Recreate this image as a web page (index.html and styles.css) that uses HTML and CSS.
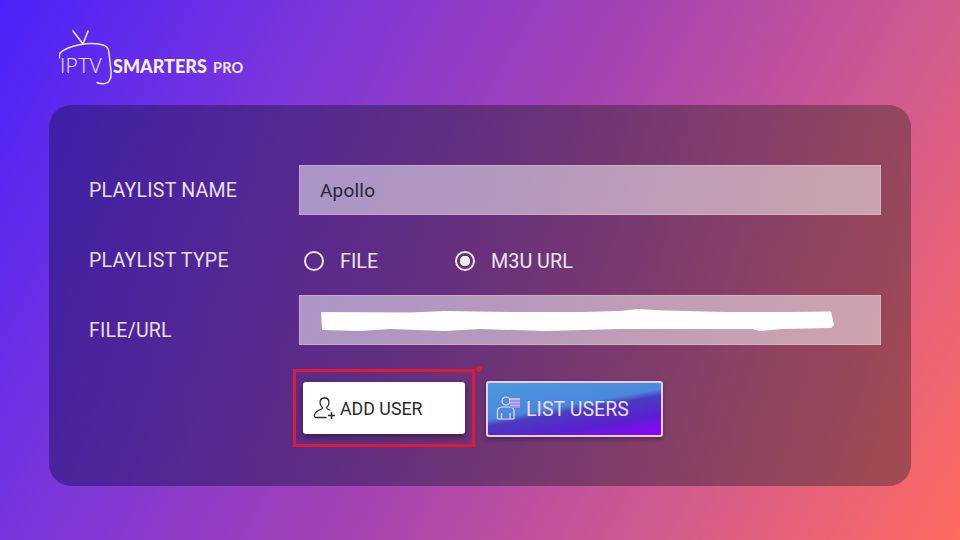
FILE: index.html
```html
<!DOCTYPE html>
<html lang="en">
<head>
<meta charset="utf-8">
<title>IPTV Smarters Pro</title>
<link rel="stylesheet" href="styles.css">
</head>
<body>
<div class="page">
  <header class="logo">
    <svg class="logo-tv" width="72" height="60" viewBox="0 0 72 60" aria-hidden="true">
      <path d="M1 24C10 16 30 13 42 15.500C48 16.500 49.500 19 50 24L52 42C52.500 50 50 54 46 54.500C43 55 40 54.500 38 53.500" fill="none" stroke="#efe4fb" stroke-width="1.500" stroke-linecap="round"/>
      <path d="M1 24L0.500 29" fill="none" stroke="#efe4fb" stroke-width="1.200" stroke-linecap="round"/>
      <path d="M14 2L24 15L29 2" fill="none" stroke="#efe4fb" stroke-width="1.600" stroke-linecap="round" stroke-linejoin="round"/>
    </svg>
    <span class="logo-iptv">IPTV</span>
    <span class="logo-smarters">SMARTERS</span>
    <span class="logo-pro">PRO</span>
  </header>
  <main class="panel">
    <div class="row row-name">
      <div class="label">PLAYLIST NAME</div>
      <div class="field"><span class="field-text">Apollo</span></div>
    </div>
    <div class="row row-type">
      <div class="label">PLAYLIST TYPE</div>
      <div class="radios">
        <div class="radio radio-file"><span class="dot"></span><span>FILE</span></div>
        <div class="radio"><span class="dot dot-on"></span><span>M3U URL</span></div>
      </div>
    </div>
    <div class="row row-url">
      <div class="label">FILE/URL</div>
      <div class="field">
        <svg class="redact" width="514" height="26" viewBox="0 0 514 26" aria-hidden="true">
          <path d="M1 5L90 5.500L125 4L190 5L262 5L300 4L318 2L345 3.500L405 5L470 5L511 4.500L514 18L511 21L462 22L440 24L432 22L300 22L225 24L160 22L125 24L70 22L40 24L2 23Z" fill="#fff"/>
        </svg>
      </div>
    </div>
    <div class="actions">
      <div class="highlight">
        <button class="btn btn-add" type="button">
          <svg class="icon-add" width="24" height="24" viewBox="0 0 24 24" aria-hidden="true">
            <path d="M11.500 2C8.500 2 7 4.200 7 6.500C7 8.500 7.800 10 9 11C9.500 11.500 9.500 12.500 8.500 13C5 14.500 2.500 16 1.500 18.500C1 20 1.800 21.500 3.500 21.500L13 21.500M11.500 2C14.500 2 16 4.200 16 6.500C16 8.500 15.200 10 14 11C13.500 11.500 13.500 12.500 14.500 13L16.500 14" fill="none" stroke="#2a2a2a" stroke-width="1.300" stroke-linecap="round"/>
            <path d="M15 19.500H22M18.500 16V23" fill="none" stroke="#2a2a2a" stroke-width="1.500"/>
          </svg>
          <span>ADD USER</span>
        </button>
      </div>
      <span class="marker"></span>
      <button class="btn btn-list" type="button">
        <svg class="icon-list" width="28" height="28" viewBox="0 0 28 28" aria-hidden="true">
          <circle cx="12" cy="6" r="4" fill="none" stroke="#f0dcff" stroke-width="1.200"/>
          <path d="M3.500 24V16C3.500 13 6 12 9 12H15C18 12 20 13.500 20 16V24M7.500 24V18M16 24V18M3.500 24H20" fill="none" stroke="#f0dcff" stroke-width="1.200"/>
          <rect x="16" y="3" width="10" height="10" fill="#cfc0f5" opacity=".9"/>
          <path d="M16 6H26M16 9H26M16 12H26" stroke="#6a52d8" stroke-width=".8"/>
        </svg>
        <span>LIST USERS</span>
      </button>
    </div>
  </main>
</div>
</body>
</html>
```

FILE: styles.css
```css
* { box-sizing: border-box; }
html, body { margin: 0; padding: 0; }
body { width: 960px; height: 540px; overflow: hidden; font-family: Roboto, "Liberation Sans", sans-serif; }

.page {
  width: 960px;
  height: 540px;
  padding: 0 49px;
  background: linear-gradient(119deg, #4a22fa 0%, #7a35dc 25%, #a442b4 50%, #d05a8e 75%, #ff6a60 100%);
}

.logo {
  position: relative;
  height: 105px;
  padding: 53px 0 0 11px;
  display: flex;
  align-items: baseline;
  color: #f1e8fc;
}
.logo-tv { position: absolute; left: 10px; top: 29px; }
.logo-iptv { font-family: "Open Sans", sans-serif; font-weight: 300; font-size: 21px; line-height: 24px; width: 51px; letter-spacing: .3px; }
.logo-smarters { font-family: Lato, sans-serif; font-weight: 900; font-size: 18px; line-height: 24px; margin-left: 2px; width: 100px; white-space: nowrap; color: #f6effd; }
.logo-pro { font-family: Lato, sans-serif; font-weight: 700; font-size: 14.500px; line-height: 24px; letter-spacing: .2px; }

.panel {
  width: 862px;
  height: 381px;
  padding: 60px 30px 0 40px;
  border-radius: 22px;
  background: linear-gradient(90deg, rgba(45,25,120,.62), rgba(55,35,75,.55) 50%, rgba(105,55,60,.58));
}

.row { display: flex; align-items: center; color: #f0e4f8; }
.label { width: 210px; font-size: 19.600px; letter-spacing: .2px; color: #eadff5; }
.row-name { height: 50px; }
.row-type { height: 50px; margin-top: 20px; }
.row-url { height: 50px; margin-top: 10px; }
.row-url .label { margin-top: 20px; }

.field {
  flex: 1;
  height: 50px;
  display: flex;
  align-items: center;
  padding-left: 20px;
  background: rgba(255,255,255,.5);
  border: 1px solid rgba(255,200,220,.35);
}
.field-text { font-size: 19px; color: #2c2438; letter-spacing: .2px; }
.redact { display: block; flex: none; }

.radios { display: flex; align-items: center; margin-top: 2px; padding-left: 5px; font-size: 19.800px; }
.radio { display: flex; align-items: center; gap: 16px; }
.radio-file { width: 151px; }
.dot { width: 20px; height: 20px; border: 2px solid #f2e4f8; border-radius: 50%; flex: none; }
.dot-on { background: radial-gradient(circle, #f6edfb 0 5px, transparent 5.500px); }

.actions { display: flex; align-items: flex-start; margin: 24px 0 0 204px; }
.highlight {
  width: 182px;
  height: 78px;
  padding: 10px 7px 0 7px;
  border: 3px solid #dc1c34;
  flex: none;
}
.marker { width: 6px; height: 6px; margin: -3px 0 0 1px; border-radius: 50%; background: #dc1c34; flex: none; }
.btn {
  display: flex;
  align-items: center;
  padding: 0;
  font-family: inherit;
  border-radius: 3px;
}
.btn-add {
  width: 162px;
  height: 52px;
  gap: 3px;
  padding-left: 10px;
  background: #fff;
  color: #2a2a2a;
  border: 0;
  font-size: 17.800px;
  box-shadow: 0 3px 6px rgba(0,0,0,.4);
}
.btn-list {
  width: 177px;
  height: 56px;
  margin: 12px 0 0 4px;
  padding-left: 6px;
  gap: 4px;
  color: #eddcff;
  font-size: 19.600px;
  border: 2px solid #e8cdf5;
  background: linear-gradient(170deg, #4a98e0 0%, #4a88dc 44%, #4a3cc0 52%, #5a20d0 75%, #8808f5 95%);
  box-shadow: 0 2px 5px rgba(0,0,0,.35);
}
```
